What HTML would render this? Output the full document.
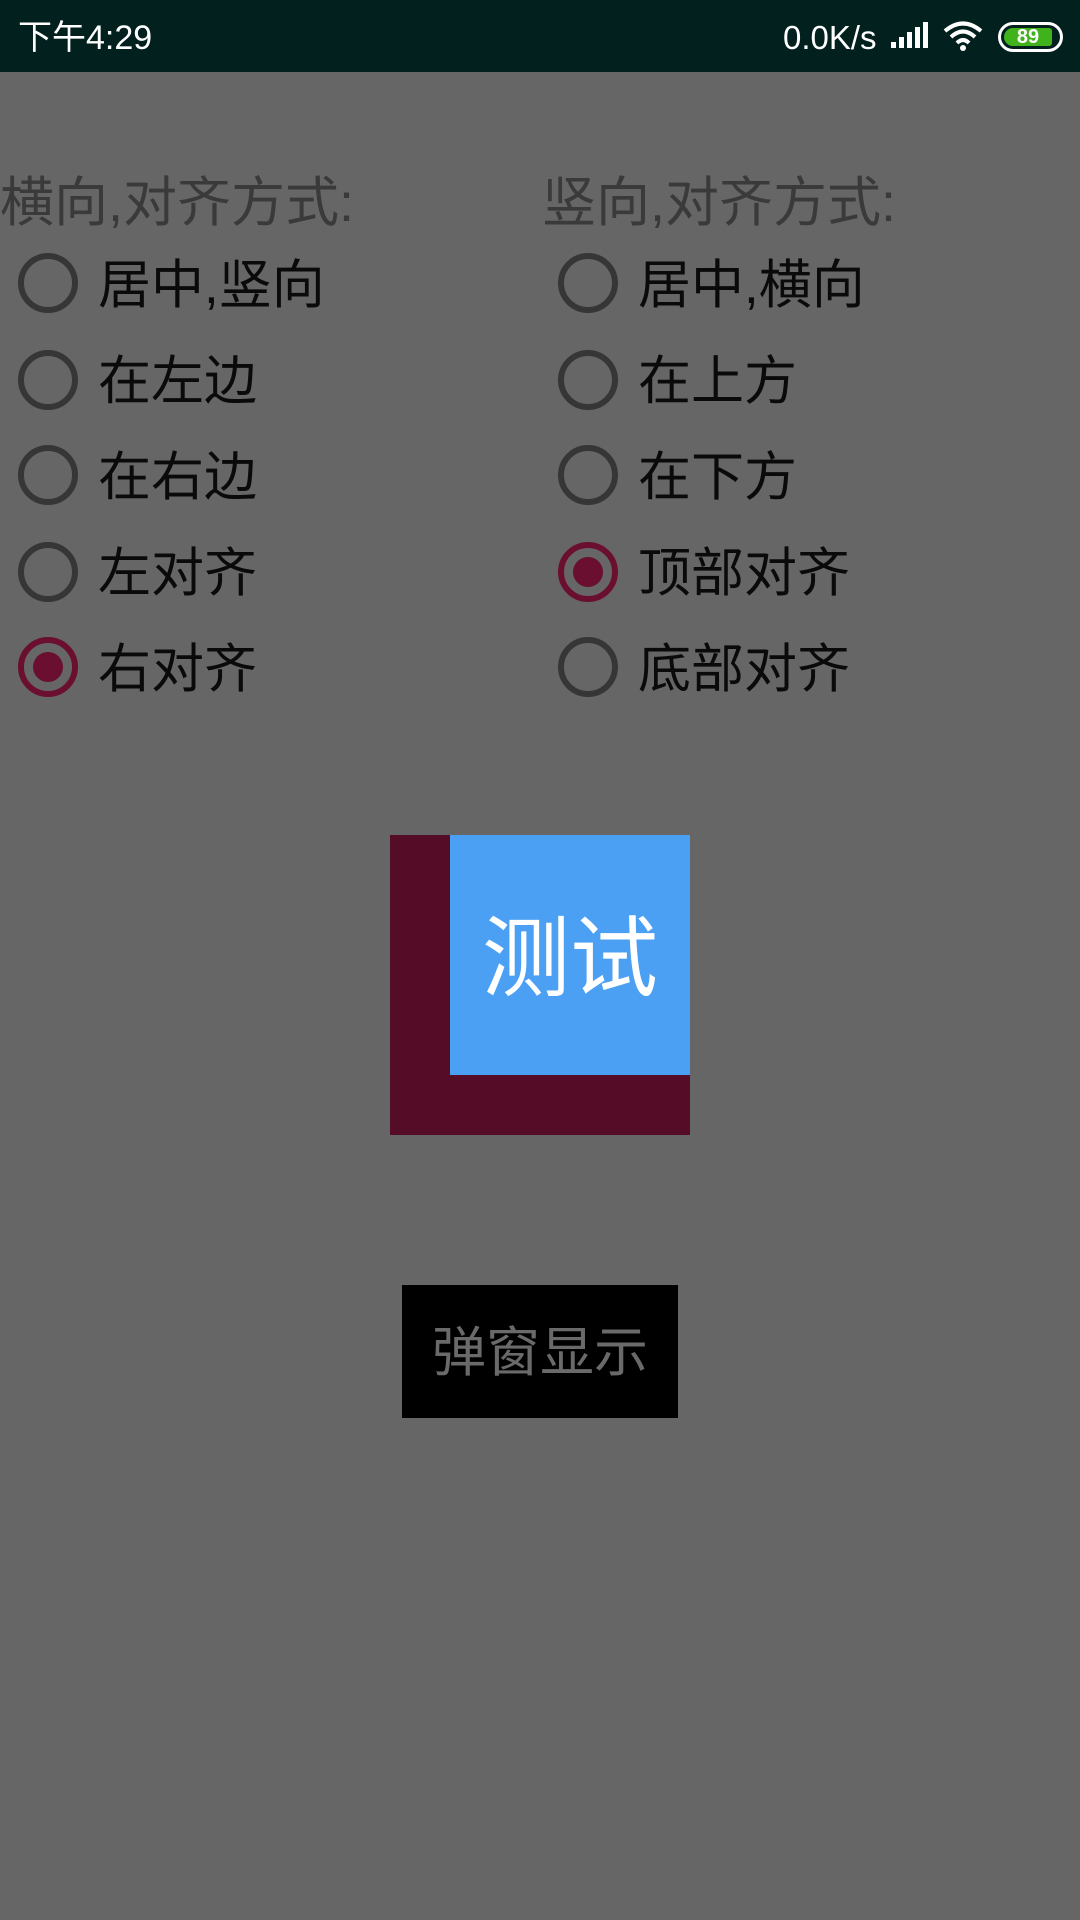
<!DOCTYPE html>
<html><head><meta charset="utf-8"><style>
*{margin:0;padding:0;box-sizing:border-box}
body{width:1080px;height:1920px;background:#666;position:relative;overflow:hidden;font-family:"Liberation Sans","Noto Sans CJK SC",sans-serif}
.sb{position:absolute;left:0;top:0;width:1080px;height:72px;background:#02201e;color:#fff}
.abs{position:absolute;white-space:nowrap}
.h{font-size:54px;color:#3a3a3a;line-height:60px}
.r{position:absolute;width:60px;height:60px;border-radius:50%;border:6px solid #363636}
.r.on{border-color:#6a0f30}
.r.on::after{content:"";position:absolute;left:9px;top:9px;width:30px;height:30px;border-radius:50%;background:#6a0f30}
.t{font-size:53px;color:#0a0a0a;line-height:60px}
</style></head><body>
<div class="sb">
 <div class="abs" style="left:18px;top:16px;font-size:34px;line-height:44px">下午4:29</div>
 <div class="abs" style="left:783px;top:16px;font-size:33px;line-height:44px">0.0K/s</div>
 <svg class="abs" style="left:890px;top:22px" width="40" height="28"><rect x="1" y="20" width="5" height="6" fill="#fff"/><rect x="9" y="15" width="5" height="11" fill="#fff"/><rect x="17" y="10" width="5" height="16" fill="#fff"/><rect x="25" y="5" width="5" height="21" fill="#fff"/><rect x="33" y="0" width="5" height="26" fill="#fff"/></svg>
 <svg class="abs" style="left:942px;top:20px" width="42" height="32" viewBox="0 0 42 32"><path d="M3 11 Q21 -4 39 11" stroke="#fff" stroke-width="4" fill="none"/><path d="M9 17 Q21 6 33 17" stroke="#fff" stroke-width="4" fill="none"/><path d="M15 23 Q21 17 27 23" stroke="#fff" stroke-width="4" fill="none"/><circle cx="21" cy="28" r="3" fill="#fff"/></svg>
 <div class="abs" style="left:998px;top:22px;width:65px;height:30px;border:3px solid #fff;border-radius:15px;padding:3px">
  <div style="width:48px;height:18px;background:#3fb21c;border-radius:9px 3px 3px 9px;color:#fff;font-size:20px;font-weight:bold;line-height:18px;text-align:center">89</div>
 </div>
</div>
<div class="abs h" style="left:0;top:173px">横向,对齐方式:</div>
<div class="abs h" style="left:542px;top:173px">竖向,对齐方式:</div>

<div class="r" style="left:18px;top:253px"></div><div class="abs t" style="left:98px;top:256px">居中,竖向</div>
<div class="r" style="left:18px;top:350px"></div><div class="abs t" style="left:98px;top:352px">在左边</div>
<div class="r" style="left:18px;top:445px"></div><div class="abs t" style="left:98px;top:448px">在右边</div>
<div class="r" style="left:18px;top:542px"></div><div class="abs t" style="left:98px;top:544px">左对齐</div>
<div class="r on" style="left:18px;top:637px"></div><div class="abs t" style="left:98px;top:640px">右对齐</div>

<div class="r" style="left:558px;top:253px"></div><div class="abs t" style="left:638px;top:256px">居中,横向</div>
<div class="r" style="left:558px;top:350px"></div><div class="abs t" style="left:638px;top:352px">在上方</div>
<div class="r" style="left:558px;top:445px"></div><div class="abs t" style="left:638px;top:448px">在下方</div>
<div class="r on" style="left:558px;top:542px"></div><div class="abs t" style="left:638px;top:544px">顶部对齐</div>
<div class="r" style="left:558px;top:637px"></div><div class="abs t" style="left:638px;top:640px">底部对齐</div>

<div class="abs" style="left:390px;top:835px;width:300px;height:300px;background:#550c26"></div>
<div class="abs" style="left:450px;top:835px;width:240px;height:240px;background:#4ca0f4;color:#fff;font-size:88px;line-height:248px;text-align:center">测试</div>

<div class="abs" style="left:402px;top:1285px;width:276px;height:133px;background:#000;color:#6a6a6a;font-size:54px;line-height:137px;text-align:center">弹窗显示</div>
</body></html>
